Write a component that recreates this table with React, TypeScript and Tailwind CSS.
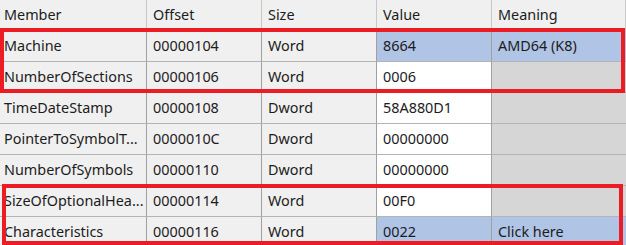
type Row = {
  member: string;
  offset: string;
  size: string;
  value: string;
  meaning: string;
  selected?: boolean;
};

const rows: Row[] = [
  { member: "Machine", offset: "00000104", size: "Word", value: "8664", meaning: "AMD64 (K8)", selected: true },
  { member: "NumberOfSections", offset: "00000106", size: "Word", value: "0006", meaning: "" },
  { member: "TimeDateStamp", offset: "00000108", size: "Dword", value: "58A880D1", meaning: "" },
  { member: "PointerToSymbolT...", offset: "0000010C", size: "Dword", value: "00000000", meaning: "" },
  { member: "NumberOfSymbols", offset: "00000110", size: "Dword", value: "00000000", meaning: "" },
  { member: "SizeOfOptionalHea...", offset: "00000114", size: "Word", value: "00F0", meaning: "" },
  { member: "Characteristics", offset: "00000116", size: "Word", value: "0022", meaning: "Click here", selected: true },
];

const cols = "grid grid-cols-[147px_115px_115px_115px_1fr]";
const cell = "h-[31px] flex items-center px-[6px] border-r border-b border-r-[#a0a0a0] border-b-[#b4b4b4] whitespace-nowrap overflow-hidden";

export default function App() {
  return (
    <div className="relative w-[626px] h-[245px] overflow-hidden bg-[#f0f0f0] text-[14.4px] text-[#1c1c1c] font-['Noto_Sans',sans-serif]">
      <div className={cols}>
        {["Member", "Offset", "Size", "Value", "Meaning"].map((h, i) => (
          <div key={h} className={`${cell} ${i === 0 ? "pl-[4px]" : ""} bg-[#f0f0f0] border-r-[#c8c8c8]`}>
            {h}
          </div>
        ))}
        {rows.map((r) => (
          <div key={r.member} className="contents">
            <div className={`${cell} pl-[4px] bg-[#f0f0f0]`}>{r.member}</div>
            <div className={`${cell} bg-[#f0f0f0]`}>{r.offset}</div>
            <div className={`${cell} bg-[#f0f0f0]`}>{r.size}</div>
            <div className={`${cell} ${r.selected ? "bg-[#b0c4e6]" : "bg-white"}`}>{r.value}</div>
            <div className={`${cell} ${r.selected ? "bg-[#b0c4e6]" : "bg-[#d6d6d6]"} border-r-0`}>{r.meaning}</div>
          </div>
        ))}
      </div>
      <div className="absolute left-[0px] top-[28px] w-[625px] h-[65px] border-[4px] border-[#ec1c24]" />
      <div className="absolute left-[2px] top-[184px] w-[621px] h-[61px] border-[4px] border-[#ec1c24]" />
    </div>
  );
}
